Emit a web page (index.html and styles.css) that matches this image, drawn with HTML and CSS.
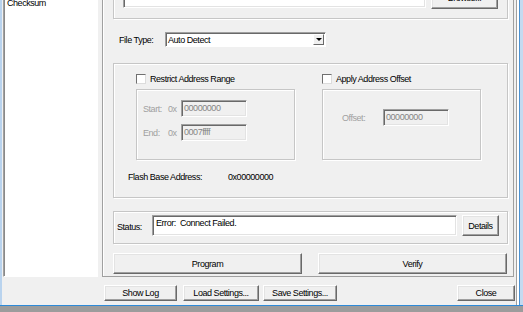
FILE: index.html
```html
<!DOCTYPE html>
<html>
<head>
  <meta name="viewport" content="width=device-width, initial-scale=1.0">
  <link rel="stylesheet" href="styles.css">
</head>
<body>
  <div class="window">
    <div class="client">
      <!-- Left tree -->
      <div class="side">
        <ul class="tree">
          <li>Checksum</li>
        </ul>
      </div>

      <div class="main">
        <div class="panel">
          <!-- File group (top is cut off) -->
          <div class="group group-file">
            <div class="edit file-path"></div>
            <button class="btn btn-browse">Browse...</button>
          </div>

          <div class="file-type-row">
            <span class="file-type-label">File Type:</span>
            <div class="combo">
              <span class="combo-text">Auto Detect</span>
              <span class="combo-arrow"></span>
            </div>
          </div>

          <!-- Address options -->
          <div class="group group-addr">
            <div class="addr-cols">
              <div class="addr-col">
                <div class="check"><span class="check-box"></span>Restrict Address Range</div>
                <div class="subgroup range-box">
                  <div class="addr-row">
                    <span class="addr-label">Start:</span>
                    <span class="addr-prefix">0x</span>
                    <span class="edit edit-disabled addr-edit">00000000</span>
                  </div>
                  <div class="addr-row">
                    <span class="addr-label">End:</span>
                    <span class="addr-prefix">0x</span>
                    <span class="edit edit-disabled addr-edit">0007ffff</span>
                  </div>
                </div>
              </div>
              <div class="addr-col">
                <div class="check"><span class="check-box"></span>Apply Address Offset</div>
                <div class="subgroup offset-box">
                  <div class="addr-row">
                    <span class="offset-label">Offset:</span>
                    <span class="edit edit-disabled addr-edit">00000000</span>
                  </div>
                </div>
              </div>
            </div>
            <div class="flash-row">
              <span class="flash-label">Flash Base Address:</span>
              <span>0x00000000</span>
            </div>
          </div>

          <!-- Status -->
          <div class="group group-status">
            <span class="status-label">Status:</span>
            <div class="edit status-edit">Error:&nbsp; Connect Failed.</div>
            <button class="btn btn-details">Details</button>
          </div>

          <div class="action-row">
            <button class="btn btn-action">Program</button>
            <button class="btn btn-action">Verify</button>
          </div>
        </div>

        <div class="footer">
          <button class="btn btn-foot btn-log">Show Log</button>
          <button class="btn btn-foot btn-load">Load Settings...</button>
          <button class="btn btn-foot btn-save">Save Settings...</button>
          <button class="btn btn-foot btn-close">Close</button>
        </div>
      </div>

      <div class="frame-right"></div>
    </div>
    <div class="frame-bottom"></div>
  </div>
</body>
</html>
```

FILE: styles.css
```css
* {
  box-sizing: border-box;
}

body {
  margin: 0;
  padding: 0;
  width: 523px;
  height: 312px;
  overflow: hidden;
  background: #f0f0f0;
  font-family: "Liberation Sans", Arial, sans-serif;
  font-size: 9px;
  letter-spacing: -0.45px;
  line-height: 12px;
  color: #000;
}

.window {
  display: flex;
  flex-direction: column;
  height: 312px;
}

.client {
  display: flex;
  height: 305px;
  overflow: hidden;
  border-left: 2px solid #b9d3ee;
}

/* Left tree */
.side {
  width: 99px;
  padding-left: 1px;
}

.tree {
  list-style: none;
  margin: -4px 0 0;
  padding: 0 0 0 2px;
  width: 95px;
  height: 281px;
  background: #fff;
  border: 1px solid;
  border-color: #a0a0a0 #fff #fff #a0a0a0;
  box-shadow: inset 1px 1px #8a8a8a;
}

.tree li {
  padding-left: 1px;
}

/* Right side */
.main {
  width: 415px;
  display: flex;
  flex-direction: column;
}

.panel {
  margin: -30px 0 0 1px;
  width: 412px;
  height: 307px;
  border: 1px solid #a0a0a0;
  box-shadow: inset 1px 1px #fff;
  padding: 0 5px 0 10px;
}

.group {
  border: 1px solid #c6c6c6;
  box-shadow: inset 1px 1px #fff, 1px 1px #fff;
}

.edit {
  background: #fff;
  border: 1px solid;
  border-color: #a0a0a0 #fff #fff #a0a0a0;
  box-shadow: inset 1px 1px #696969, inset -1px -1px #e3e3e3;
  padding: 2px 3px;
  white-space: nowrap;
}

.edit-disabled {
  background: #f0f0f0;
  color: #858585;
}

.btn {
  font: inherit;
  letter-spacing: inherit;
  color: #000;
  background: #f0f0f0;
  border: 1px solid;
  border-color: #fff #696969 #696969 #fff;
  box-shadow: inset -1px -1px #a0a0a0, inset 1px 1px #e3e3e3;
  padding: 0;
  margin: 0;
}

.group-file {
  height: 48px;
  display: flex;
  align-items: flex-end;
  padding: 0 9px 9px;
}

.file-path {
  width: 303px;
  height: 21px;
  margin-bottom: 1px;
}

.btn-browse {
  width: 67px;
  height: 23px;
  margin-left: 5px;
}

.file-type-row {
  display: flex;
  align-items: center;
  margin: 13px 0 0 6px;
  height: 15px;
}

.file-type-label {
  width: 46px;
}

.combo {
  width: 161px;
  height: 15px;
  display: flex;
  align-items: center;
  background: #fff;
  border: 1px solid;
  border-color: #a0a0a0 #fff #fff #a0a0a0;
  box-shadow: inset 1px 1px #696969;
  padding: 1px 1px 1px 2px;
}

.combo-text {
  flex: 1;
}

.combo-arrow {
  width: 11px;
  height: 11px;
  background: #f0f0f0;
  border: 1px solid;
  border-color: #fff #696969 #696969 #fff;
  position: relative;
}

.combo-arrow::after {
  content: "";
  position: absolute;
  left: 2px;
  top: 3px;
  border-left: 3px solid transparent;
  border-right: 3px solid transparent;
  border-top: 3px solid #000;
}

.group-addr {
  margin-top: 16px;
  height: 135px;
  padding-top: 9px;
}

.addr-cols {
  display: flex;
  gap: 27px;
  margin-left: 22px;
}

.addr-col {
  width: 159px;
}

.check {
  display: flex;
  align-items: center;
  height: 11px;
}

.check-box {
  width: 10px;
  height: 10px;
  margin-right: 4px;
  background: #fff;
  border: 1px solid;
  border-color: #707070 #dcdcdc #dcdcdc #707070;
}

.subgroup {
  margin-top: 5px;
  height: 71px;
  border: 1px solid #c6c6c6;
  box-shadow: inset 1px 1px #fff, 1px 1px #fff;
}

.range-box {
  padding: 10px 0 0 6px;
}

.offset-box {
  padding: 19px 0 0 19px;
}

.addr-row {
  display: flex;
  align-items: center;
  height: 17px;
  margin-bottom: 7px;
  color: #a0a0a0;
}

.addr-label {
  width: 25px;
}

.addr-prefix {
  width: 13px;
}

.offset-label {
  width: 41px;
}

.addr-edit {
  width: 66px;
  height: 17px;
  padding: 1px 2px;
}

.flash-row {
  display: flex;
  margin: 11px 0 0 14px;
}

.flash-label {
  width: 100px;
}

.group-status {
  margin-top: 13px;
  height: 33px;
  display: flex;
  padding: 3px 0 0 3px;
}

.status-label {
  width: 35px;
  padding-top: 6px;
}

.status-edit {
  width: 305px;
  height: 21px;
  padding: 1px 3px;
}

.btn-details {
  width: 37px;
  height: 21px;
  margin-left: 5px;
}

.action-row {
  display: flex;
  gap: 16px;
  margin-top: 9px;
}

.btn-action {
  width: 189px;
  height: 21px;
}

/* Bottom buttons */
.footer {
  height: 28px;
  display: flex;
  padding: 8px 1px 0 3px;
}

.btn-foot {
  height: 16px;
}

.btn-log {
  width: 73px;
}

.btn-load {
  width: 76px;
  margin-left: 6px;
}

.btn-save {
  width: 74px;
  margin-left: 4px;
}

.btn-close {
  width: 58px;
  margin-left: auto;
}

.frame-right {
  width: 7px;
  border-left: 1px solid #a0a0a0;
  background: linear-gradient(to right, #fff 0 2px, #4a90d0 2px 3px, #c4daf0 3px);
}

.frame-bottom {
  height: 7px;
  border-top: 1px solid #2d8ad8;
  background: #9c9c9c;
}
```
